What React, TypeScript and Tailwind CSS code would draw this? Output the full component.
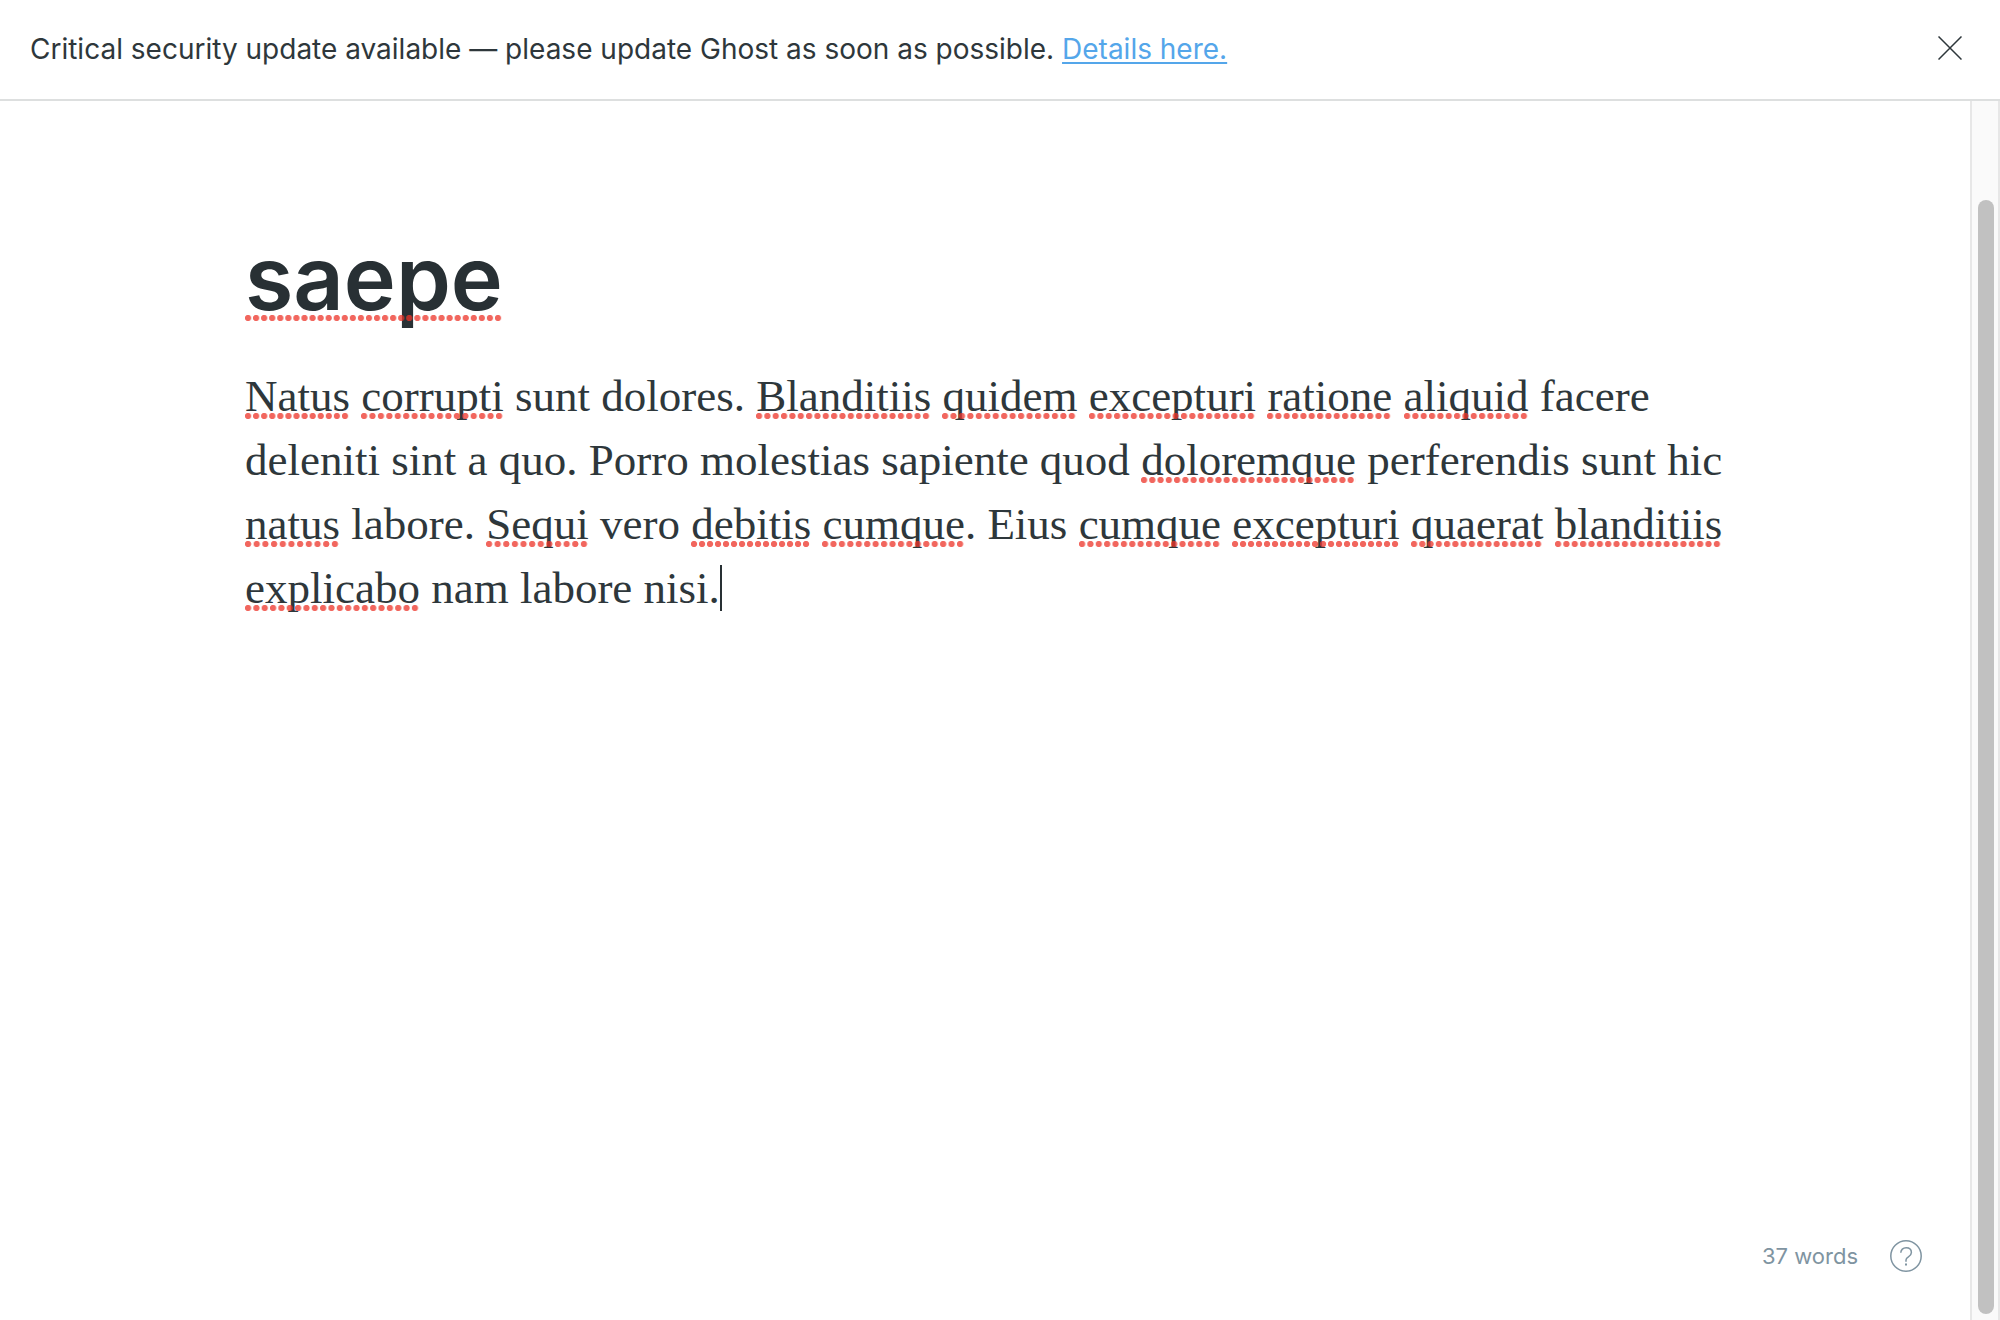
import React, { Fragment } from 'react';

function Misspelled({ children, title = false }: { children: React.ReactNode; title?: boolean }) {
  return (
    <span
      className={
        (title ? 'after:bottom-[13px] ' : 'after:bottom-[9px] ') +
        "relative inline-block after:pointer-events-none after:absolute after:left-0 after:h-[6px] after:w-full after:bg-[radial-gradient(circle_at_3px_3px,rgba(237,51,40,0.75)_2.7px,transparent_3.6px)] after:bg-size-[8px_6px] after:bg-repeat-space after:content-['']"
      }
    >
      {children}
    </span>
  );
}

// Words between underscores are flagged by the spell checker.
const lines = [
  '_Natus_ _corrupti_ sunt dolores. _Blanditiis_ _quidem_ _excepturi_ _ratione_ _aliquid_ facere',
  'deleniti sint a quo. Porro molestias sapiente quod _doloremque_ perferendis sunt hic',
  '_natus_ labore. _Sequi_ vero _debitis_ _cumque_. Eius _cumque_ _excepturi_ _quaerat_ _blanditiis_',
  '_explicabo_ nam labore nisi.',
];

function Line({ text }: { text: string }) {
  return (
    <>
      {text.split('_').map((part, i) =>
        i % 2 ? <Misspelled key={i}>{part}</Misspelled> : <Fragment key={i}>{part}</Fragment>
      )}
    </>
  );
}

export default function App() {
  return (
    <div className="flex h-screen flex-col bg-white font-['Inter',sans-serif] text-[#2e373b]">
      <header className="flex items-center justify-between border-b-2 border-[#dddfdf] py-7 pr-[38px] pl-[30px]">
        <p className="text-[28px] leading-[43px]">
          Critical security update available — please update Ghost as soon as possible.{' '}
          <a href="#details" className="text-[#54a6ea] underline decoration-2 underline-offset-3">
            Details here.
          </a>
        </p>
        <button type="button" aria-label="Close" className="mb-1">
          <svg width="24" height="24" viewBox="0 0 24 24" fill="none" stroke="currentColor" strokeWidth="1.5">
            <path d="M.5.5l23 23M23.5.5l-23 23" />
          </svg>
        </button>
      </header>
      <div className="flex min-h-0 flex-1">
        <main className="flex min-w-0 flex-1 flex-col">
          <article className="mx-auto w-full max-w-[1480px] flex-1 pt-[121px]">
            <h1 className="text-[88px] leading-[112px] font-semibold text-[#283034]">
              <Misspelled title>saepe</Misspelled>
            </h1>
            <p className="mt-[30px] font-['Liberation_Serif',serif] text-[45px] leading-[64px] whitespace-nowrap">
              {lines.map((line, i) => (
                <Fragment key={line}>
                  {i > 0 && <br />}
                  <Line text={line} />
                </Fragment>
              ))}
              <span aria-hidden="true" className="inline-block h-[46px] w-[2px] bg-[#283034] align-[-8px]" />
            </p>
          </article>
          <footer className="flex items-center justify-end gap-8 pr-12 pb-12 text-[#7f94a1]">
            <span className="text-[22px] leading-8">37 words</span>
            <button type="button" aria-label="Help">
              <svg width="32" height="32" viewBox="0 0 32 32" fill="none" stroke="currentColor" strokeWidth="1.5">
                <circle cx="16" cy="16" r="15.2" />
                <path d="M10.8 12.8c0-3 2.3-5.1 5.4-5.1s5.2 2 5.2 4.8c0 4.6-5.4 4.1-5.4 7.6v1.7" />
                <path d="M16 23.6v2" strokeWidth="2" />
              </svg>
            </button>
          </footer>
        </main>
        <div className="w-[30px] border-x-2 border-[#e7e7e7] bg-[#fafafa] pt-[99px] pr-1 pb-1.5 pl-1.5">
          <div className="h-full rounded-full bg-[#c1c1c1]" />
        </div>
      </div>
    </div>
  );
}
